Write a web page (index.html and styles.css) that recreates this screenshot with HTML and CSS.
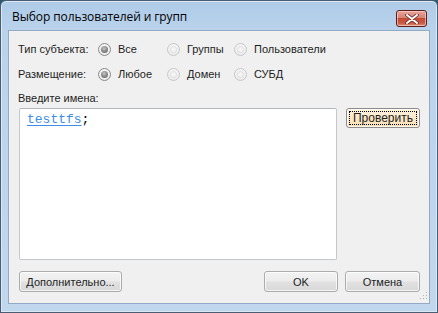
FILE: index.html
```html
<!DOCTYPE html>
<html lang="ru">
<head>
<meta charset="utf-8">
<title>Выбор пользователей и групп</title>
<link rel="stylesheet" href="styles.css">
</head>
<body>
<div class="window">
  <div class="titlebar">
    <span class="title">Выбор пользователей и групп</span>
    <span class="close">
      <svg width="14" height="10" viewBox="0 0 14 10"><path d="M2 1 L12 9 M12 1 L2 9" stroke="#5a1e1e" stroke-width="3.4" stroke-linecap="round"/><path d="M2 1 L12 9 M12 1 L2 9" stroke="#ffffff" stroke-width="2" stroke-linecap="round"/></svg>
    </span>
  </div>
  <div class="client">
    <div class="options">
      <span class="label">Тип субъекта:</span>
      <span class="opt"><span class="radio checked"></span>Все</span>
      <span class="opt"><span class="radio"></span>Группы</span>
      <span class="opt"><span class="radio"></span>Пользователи</span>
      <span class="label">Размещение:</span>
      <span class="opt"><span class="radio checked"></span>Любое</span>
      <span class="opt"><span class="radio"></span>Домен</span>
      <span class="opt"><span class="radio"></span>СУБД</span>
    </div>
    <div class="names-label">Введите имена:</div>
    <div class="names-row">
      <div class="textbox"><span class="name">testtfs</span>;</div>
      <span class="btn check"><span class="focus">Проверить</span></span>
    </div>
    <div class="footer">
      <span class="btn more">Дополнительно...</span>
      <span class="spacer"></span>
      <span class="btn ok">OK</span>
      <span class="btn cancel">Отмена</span>
    </div>
    <span class="grip">
      <svg width="10" height="10" viewBox="0 0 10 10" fill="#b0b0b0"><rect x="8" y="0" width="1" height="1"/><rect x="5" y="3" width="1" height="1"/><rect x="8" y="3" width="1" height="1"/><rect x="2" y="6" width="1" height="1"/><rect x="5" y="6" width="1" height="1"/><rect x="8" y="6" width="1" height="1"/></svg>
    </span>
  </div>
</div>
</body>
</html>
```
FILE: styles.css
```css
* { box-sizing: border-box; }
html, body { margin: 0; padding: 0; }
body {
  width: 438px;
  height: 313px;
  background: #2b5b73;
  font-family: "Liberation Sans", Arial, sans-serif;
  font-size: 11px;
  color: #1e1e1e;
  overflow: hidden;
}
.window {
  width: 438px;
  height: 313px;
  border: 1px solid #4a5d73;
  border-radius: 6px 6px 0 0;
  background: linear-gradient(#aecbe8 0, #bad3ec 30px, #c1d7ee 100%);
  display: flex;
  flex-direction: column;
  box-shadow: inset 0 0 0 1px #dbe8f5;
}
.titlebar {
  height: 29px;
  display: flex;
  align-items: center;
  padding: 0 10px 0 11px;
  position: relative;
}
.title {
  font-family: "Open Sans", "Noto Sans", sans-serif;
  font-size: 12px;
  color: #000;
  padding-top: 2px;
  letter-spacing: -0.1px;
}
.close {
  position: absolute;
  right: 10px;
  top: 9px;
  width: 31px;
  height: 17px;
  border: 1px solid #5c1e1e;
  border-radius: 3px;
  background: linear-gradient(#e8a59a 0, #d88374 45%, #c24a35 50%, #c95a43 80%, #e0907c 100%);
  box-shadow: inset 0 0 0 1px rgba(255, 220, 210, 0.6);
  display: flex;
  align-items: center;
  justify-content: center;
}
.close svg { display: block; }
.client {
  flex: 1;
  margin: 0 7px 8px 7px;
  background: #f0f0f0;
  border: 1px solid #93a9c4;
  padding: 11px 9px 11px 9px;
  display: flex;
  flex-direction: column;
  position: relative;
}
.options {
  display: grid;
  grid-template-columns: 80px 69px 67px 1fr;
  row-gap: 11px;
  line-height: 14px;
}
.label { white-space: nowrap; }
.opt {
  display: flex;
  align-items: center;
  gap: 7px;
  white-space: nowrap;
}
.radio {
  width: 13px;
  height: 13px;
  border-radius: 50%;
  border: 1px solid #c9c9c9;
  background: radial-gradient(circle at 50% 40%, #ffffff 0, #f1f1f1 50%, #e2e2e2 100%);
  display: flex;
  align-items: center;
  justify-content: center;
  flex: none;
}
.radio::after {
  content: "";
  width: 7px;
  height: 7px;
  border-radius: 50%;
  border: 1px solid #dcdcdc;
  background: #f4f4f4;
  box-sizing: border-box;
}
.radio.checked {
  border-color: #8a8a8a;
}
.radio.checked::after {
  border: none;
  background: radial-gradient(circle at 45% 35%, #c6c6c6 0, #8f8f8f 45%, #5f5f5f 100%);
}
.names-label {
  margin-top: 10px;
  line-height: 14px;
}
.names-row {
  display: flex;
  align-items: flex-start;
  gap: 9px;
  margin-top: 3px;
  margin-left: 1px;
}
.textbox {
  width: 318px;
  height: 152px;
  background: #fff;
  border: 1px solid #c4c7cc;
  border-top-color: #b4b7bc;
  border-radius: 2px;
  padding: 3px 7px;
  font-family: "Liberation Mono", "Courier New", monospace;
  font-size: 13px;
  line-height: 16px;
  color: #000;
}
.name {
  color: #3d8ee8;
  text-decoration: underline;
  text-underline-offset: 2px;
}
.btn {
  display: flex;
  align-items: center;
  justify-content: center;
  height: 21px;
  border: 1px solid #acacac;
  border-radius: 3px;
  background: linear-gradient(#f3f3f3 0, #ececec 48%, #e1e1e1 52%, #d9d9d9 100%);
  box-shadow: inset 0 0 0 1px rgba(255, 255, 255, 0.7);
  color: #1e1e1e;
  white-space: nowrap;
}
.check {
  width: 74px;
  height: 20px;
  border-color: #8c8c8c;
  background: linear-gradient(#fdf2df 0, #fbe8c9 50%, #f8dfb7 100%);
  padding: 2px;
}
.check .focus {
  flex: 1;
  align-self: stretch;
  display: flex;
  align-items: center;
  justify-content: center;
  border: 1px dotted #000;
  font-size: 12px;
}
.footer {
  display: flex;
  margin-top: 11px;
  margin-left: 1px;
  gap: 7px;
}
.spacer { flex: 1; }
.more { width: 103px; }
.ok { width: 74px; }
.cancel { width: 75px; }
.grip {
  position: absolute;
  right: 1px;
  bottom: 1px;
  width: 10px;
  height: 10px;
}
.grip svg { display: block; }
```
